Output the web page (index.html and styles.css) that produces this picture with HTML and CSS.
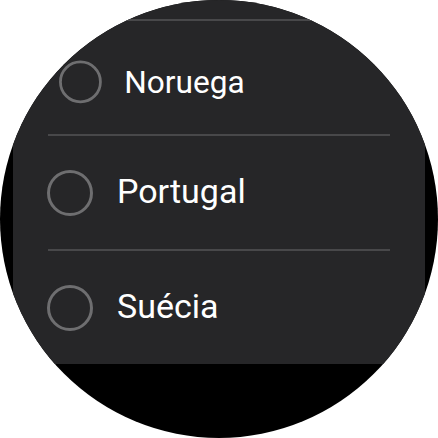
FILE: index.html
```html
<!DOCTYPE html>
<html>
<head>
    <meta charset="UTF-8">
    <meta name="viewport" content="width=device-width, initial-scale=1.0">
    <title>País</title>
    <link rel="stylesheet" href="styles.css">
</head>
<body>
    <div class="screen">
        <div class="card">
            <div class="top-space"></div>
            <div class="divider"></div>
            <div class="option option-edge">
                <span class="radio"></span>
                <span class="label">Noruega</span>
            </div>
            <div class="divider"></div>
            <div class="option">
                <span class="radio"></span>
                <span class="label">Portugal</span>
            </div>
            <div class="divider"></div>
            <div class="option">
                <span class="radio"></span>
                <span class="label">Suécia</span>
            </div>
        </div>
    </div>
</body>
</html>
```

FILE: styles.css
```css
body {
    margin: 0;
    background: #ffffff;
    font-family: Roboto, "Open Sans", sans-serif;
}

.screen {
    width: 438px;
    height: 438px;
    border-radius: 50%;
    overflow: hidden;
    background: #000000;
}

.card {
    margin: 0 13px;
    padding: 0 35px;
    background: #262628;
}

.top-space {
    height: 19px;
}

.divider {
    height: 2px;
    background: #48484a;
}

.option {
    height: 113px;
    display: flex;
    align-items: center;
}

.option-edge {
    transform: translateY(4px) scale(0.93);
}

.option-edge .label {
    margin-bottom: 0;
}

.radio {
    width: 40px;
    height: 40px;
    border: 3px solid #6e6e70;
    border-radius: 50%;
    flex-shrink: 0;
    margin-left: -1px;
}

.label {
    margin-left: 24px;
    margin-bottom: 3px;
    color: #ffffff;
    font-size: 34px;
}
```
